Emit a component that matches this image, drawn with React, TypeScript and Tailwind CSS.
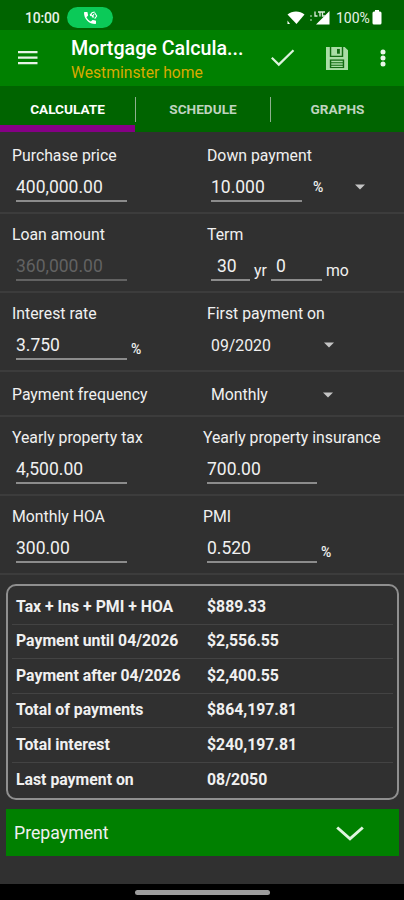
import React from 'react'
import clsx from 'clsx'

const tabs = ['CALCULATE', 'SCHEDULE', 'GRAPHS']

const results = [
  { label: 'Tax + Ins + PMI + HOA', value: '$889.33' },
  { label: 'Payment until 04/2026', value: '$2,556.55' },
  { label: 'Payment after 04/2026', value: '$2,400.55' },
  { label: 'Total of payments', value: '$864,197.81' },
  { label: 'Total interest', value: '$240,197.81' },
  { label: 'Last payment on', value: '08/2050' },
]

function StatusBar() {
  return (
    <div className="flex h-[30px] items-center bg-[#006400] pt-[5px] text-[#e8f2e8]">
      <span className="ml-[25px] w-[42px] text-[14px] font-medium leading-6 tracking-[-0.2px]">10:00</span>
      <span className="flex h-[21px] w-[46px] items-center justify-center rounded-full bg-[#0bca58] text-white">
        <svg width="16" height="16" viewBox="0 0 24 24" fill="currentColor">
          <path d="M6.6 10.8c1.4 2.8 3.8 5.1 6.6 6.6l2.2-2.2c.3-.3.7-.4 1-.2 1.1.4 2.3.6 3.6.6.6 0 1 .4 1 1V20c0 .6-.4 1-1 1C10.600 21 3 13.400 3 4c0-.6.4-1 1-1h3.500c.6 0 1 .4 1 1 0 1.300.2 2.500.6 3.600.1.300 0 .7-.2 1z" />
          <path
            d="M12.500 9l2.500-5 4-1M15 11l3-5M19 4l3 5-3 4M12 6l6 5"
            fill="none"
            stroke="currentColor"
            strokeWidth="1.600"
          />
        </svg>
      </span>
      <div className="ml-auto mr-[22px] flex items-center">
        <svg width="20" height="16" viewBox="0 0 20 16" fill="#fff">
          <path d="M1.500 4.500C6 .6 14 .6 18.500 4.500L10.500 14z" />
          <path d="M1.500 10.500l2.500 3.500h-2.500z" />
        </svg>
        <svg className="ml-[4px]" width="20" height="16" viewBox="0 0 20 16" fill="#fff">
          <path d="M0 5h2v2H0zM0 9h2v2H0z" opacity=".4" />
          <path d="M19.500 1v13.500H6z" />
          <path
            d="M5 1.500v4.500h2.500M8 2h4M10 2v4.500M15 2h-2.500v4h2.500"
            fill="none"
            stroke="#dcebdc"
            strokeWidth="1.300"
          />
        </svg>
        <span className="ml-[6px] w-[36px] whitespace-nowrap text-[14px] leading-6">100%</span>
        <svg width="10" height="15" viewBox="0 0 10 15" fill="#fff">
          <path d="M3 0h4v1.500h1q1.500 0 1.500 1.500v10q0 1.500-1.500 1.500H2q-1.500 0-1.500-1.500V3Q.5 1.500 2 1.500h1z" />
        </svg>
      </div>
    </div>
  )
}

function Toolbar() {
  return (
    <header className="flex h-14 bg-[#008000] text-white">
      <button type="button" aria-label="Menu" className="ml-[18px] w-[53px]">
        <svg width="20" height="14" viewBox="0 0 20 14" fill="#e6f3e6">
          <path d="M0 0h19.500v2.300H0zM0 5.500h19.500v2.300H0zM0 11h19.500v2.300H0z" />
        </svg>
      </button>
      <div className="w-[190px] pt-[7px]">
        <h1 className="whitespace-nowrap text-[19.7px] font-medium leading-6">Mortgage Calcula...</h1>
        <p className="whitespace-nowrap text-[15.7px] leading-6 text-[#d9ab00]">Westminster home</p>
      </div>
      <button type="button" aria-label="Apply" className="ml-[10px] w-6">
        <svg width="24" height="18" viewBox="0 0 24 18" fill="none" stroke="#ddf3dd" strokeWidth="2.200">
          <path d="M.8 8.800L7.800 15.600 22.500 1.200" />
        </svg>
      </button>
      <button type="button" aria-label="Save" className="ml-[31px] w-[24px]">
        <svg width="22" height="23" viewBox="0 0 23 24">
          <path d="M0 0h19.500L23 3.500V24H0z" fill="#a9dda5" />
          <path d="M4 0h1.500v9h11V0H18v10.500H4z" fill="#126b12" />
          <path d="M11.500 2h3v5h-3z" fill="#126b12" />
          <path d="M4 13h15v9H4z" fill="#126b12" />
          <path d="M5.500 14.300h12v1.600h-12zM5.500 17h12v1.500h-12zM5.500 19.500h12v1.300h-12z" fill="#a9dda5" />
        </svg>
      </button>
      <button type="button" aria-label="More" className="ml-[30px]">
        <svg width="6" height="18" viewBox="0 0 6 18" fill="#e9f6e9">
          <circle cx="3" cy="3" r="2.500" />
          <circle cx="3" cy="9" r="2.500" />
          <circle cx="3" cy="15" r="2.500" />
        </svg>
      </button>
    </header>
  )
}

function Tabs() {
  return (
    <nav className="grid h-[46px] grid-cols-[135px_135px_1fr] bg-[#006400]">
      {tabs.map((tab, i) => (
        <button
          key={tab}
          type="button"
          className={clsx(
            'flex flex-col text-[13.6px] font-bold',
            i === 0 ? 'text-white' : 'text-[#bfd4bf]'
          )}
        >
          <span
            className={clsx(
              'mt-[11px] flex h-[25px] w-full items-center justify-center',
              i > 0 && 'border-l border-[#8fb08f]'
            )}
          >
            {tab}
          </span>
          {i === 0 && <span className="mt-[3px] h-[7px] w-full bg-[#850085]" />}
        </button>
      ))}
    </nav>
  )
}

function Caret() {
  return (
    <svg width="10" height="6" viewBox="0 0 10 6" fill="#c4c4c4">
      <path d="M0 .5h10L5 5.500z" />
    </svg>
  )
}

function Row({ children }: { children: React.ReactNode }) {
  return <div className="flex h-[79px] border-b-2 border-[#3c3c3c] pl-[12px] pt-[9px]">{children}</div>
}

function Field({ label, className, children }: {
  label: string
  className?: string
  children: React.ReactNode
}) {
  return (
    <div className={className}>
      <div className="whitespace-nowrap text-[15.8px] leading-6">{label}</div>
      <div className="mt-[4px] flex h-[30px] pl-[4px]">{children}</div>
    </div>
  )
}

function Input({ value, className }: { value: string; className?: string }) {
  return (
    <div className={clsx('h-[30px] border-b-2 text-[17.5px] leading-[30px]', className)}>
      {value}
    </div>
  )
}

export default function App() {
  return (
    <div
      className="flex h-[900px] w-[404px] flex-col overflow-hidden bg-[#303030] text-[#f0f0f0]"
      style={{ fontFamily: 'Roboto, sans-serif' }}
    >
      <StatusBar />
      <Toolbar />
      <Tabs />

      <main className="flex flex-1 flex-col pt-[3px]">
        <Row>
          <Field label="Purchase price" className="w-[195px]">
            <Input value="400,000.00" className="w-[111px] border-[#8c8c8c]" />
          </Field>
          <Field label="Down payment">
            <Input value="10.000" className="w-[91px] border-[#8c8c8c]" />
            <span className="ml-[11px] w-[42px] text-[14px] font-medium leading-[31px]">%</span>
            <span className="mt-[12px]"><Caret /></span>
          </Field>
        </Row>

        <Row>
          <Field label="Loan amount" className="w-[195px]">
            <Input value="360,000.00" className="w-[111px] border-[#626262] text-[#626262]" />
          </Field>
          <Field label="Term">
            <Input value="30" className="w-[39px] border-[#8c8c8c] pl-[6px]" />
            <span className="ml-[4px] w-[17px] text-[15.8px] leading-[40px]">yr</span>
            <Input value="0" className="w-[51px] border-[#8c8c8c] pl-[5px]" />
            <span className="ml-[4px] text-[15.8px] leading-[40px]">mo</span>
          </Field>
        </Row>

        <Row>
          <Field label="Interest rate" className="w-[195px]">
            <Input value="3.750" className="w-[111px] border-[#8c8c8c]" />
            <span className="ml-[4px] text-[14px] font-medium leading-[39px]">%</span>
          </Field>
          <Field label="First payment on">
            <span className="w-[113px] text-[15.8px] leading-[31px]">09/2020</span>
            <span className="mt-[12px]"><Caret /></span>
          </Field>
        </Row>

        <div className="flex h-[45px] items-center border-b-2 border-[#3c3c3c] pl-[12px] pt-[2px] text-[15.8px]">
          <span className="w-[199px]">Payment frequency</span>
          <span className="w-[112px]">Monthly</span>
          <Caret />
        </div>

        <Row>
          <Field label="Yearly property tax" className="w-[191px]">
            <Input value="4,500.00" className="w-[111px] border-[#8c8c8c]" />
          </Field>
          <Field label="Yearly property insurance">
            <Input value="700.00" className="w-[110px] border-[#8c8c8c]" />
          </Field>
        </Row>

        <Row>
          <Field label="Monthly HOA" className="w-[191px]">
            <Input value="300.00" className="w-[111px] border-[#8c8c8c]" />
          </Field>
          <Field label="PMI">
            <Input value="0.520" className="w-[110px] border-[#8c8c8c]" />
            <span className="ml-[4px] text-[14px] font-medium leading-[39px]">%</span>
          </Field>
        </Row>

        <section className="ml-[6px] mr-[5px] mt-[9px] flex h-[216px] flex-col rounded-[10px] border-2 border-[#8f8f8f] px-[4px] pt-[4px] text-[15.8px] font-bold">
          {results.map((item) => (
            <div
              key={item.label}
              className="flex h-[34.5px] shrink-0 items-center border-b border-[#434343] pl-[4px] last:border-b-0"
            >
              <span className="w-[191px]">{item.label}</span>
              <span>{item.value}</span>
            </div>
          ))}
        </section>

        <button
          type="button"
          className="ml-[6px] mr-[5px] mt-[9px] flex h-[47px] items-center bg-[#008000] pl-[8px] pt-[2px] text-left text-[17.7px]"
        >
          <span className="w-[322px]">Prepayment</span>
          <svg width="28" height="16" viewBox="0 0 28 16" fill="none" stroke="#dff5df" strokeWidth="3">
            <path d="M1.200 1.500L14 12.800 26.800 1.500" />
          </svg>
        </button>
      </main>

      <footer className="flex h-4 justify-center bg-black pt-[6px]">
        <span className="h-[5px] w-[135px] rounded-full bg-[#9c9c9c]" />
      </footer>
    </div>
  )
}
